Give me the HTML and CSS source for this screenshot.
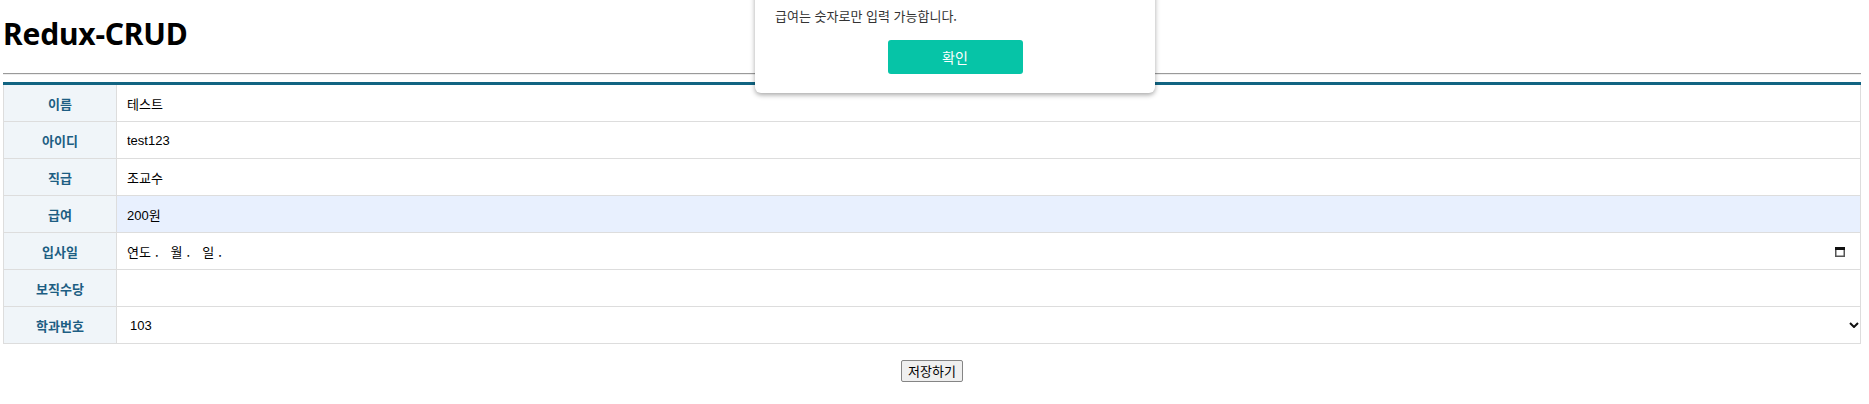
FILE: index.html
```html
<!DOCTYPE html>
<html lang="ko">
<head>
<meta charset="utf-8">
<title>Redux-CRUD</title>
<link rel="stylesheet" href="styles.css">
</head>
<body>
<div class="page">
  <h1 class="title">Redux-CRUD</h1>
  <div class="rule"></div>
  <table class="form-table">
    <tr>
      <th>이름</th>
      <td><input class="field" type="text" value="테스트"></td>
    </tr>
    <tr>
      <th>아이디</th>
      <td><input class="field" type="text" value="test123"></td>
    </tr>
    <tr>
      <th>직급</th>
      <td><input class="field" type="text" value="조교수"></td>
    </tr>
    <tr>
      <th>급여</th>
      <td class="autofill"><input class="field" type="text" value="200원"></td>
    </tr>
    <tr>
      <th>입사일</th>
      <td>
        <div class="date-field">
          <span class="date-text"><span>연도</span><span class="dot">.</span><span>월</span><span class="dot">.</span><span>일</span><span class="dot">.</span></span>
          <svg class="cal-icon" width="10" height="11" viewBox="0 0 10 11">
            <rect x="0.75" y="1.75" width="8.5" height="8.5" fill="none" stroke="#555" stroke-width="1.5"/>
            <rect x="0" y="1" width="10" height="3" fill="#111"/>
          </svg>
        </div>
      </td>
    </tr>
    <tr>
      <th>보직수당</th>
      <td><input class="field" type="text" value=""></td>
    </tr>
    <tr>
      <th>학과번호</th>
      <td>
        <div class="select-field">
          <span class="select-text">103</span>
          <svg class="chev" width="10" height="6" viewBox="0 0 10 6">
            <path d="M1 1 L5 5 L9 1" fill="none" stroke="#111" stroke-width="2"/>
          </svg>
        </div>
      </td>
    </tr>
  </table>
  <div class="actions">
    <button class="save-btn" type="button">저장하기</button>
  </div>
</div>

<div class="modal">
  <p class="modal-text">급여는 숫자로만 입력 가능합니다.</p>
  <div class="modal-actions">
    <button class="confirm-btn" type="button">확인</button>
  </div>
</div>
</body>
</html>
```

FILE: styles.css
```css
html, body {
  margin: 0;
  padding: 0;
  background: #fff;
}

body {
  font-family: "Liberation Sans", "Noto Sans CJK KR", sans-serif;
  font-size: 13px;
  color: #000;
}

.page {
  padding: 0 8px 0 3px;
}

.title {
  margin: 16px 0 0 0;
  font-family: "Noto Sans", "Noto Sans CJK KR", sans-serif;
  font-weight: 700;
  font-size: 30px;
  line-height: 36px;
  letter-spacing: -0.2px;
  color: #000;
}

.rule {
  margin-top: 21px;
  border-top: 1px solid #9a9a9a;
  border-bottom: 1px solid #eeeeee;
}

.form-table {
  margin-top: 7px;
  width: 100%;
  border-collapse: collapse;
  border-top: 3px solid #116482;
}

.form-table th,
.form-table td {
  border: 1px solid #dddddd;
  padding: 0;
  height: 36px;
}

.form-table tr:first-child th,
.form-table tr:first-child td {
  border-top: 3px solid #116482;
}

.form-table th {
  width: 112px;
  background: #f0f5f9;
  color: #1d5e83;
  font-family: "Noto Sans CJK KR", sans-serif;
  font-weight: 700;
  font-size: 13px;
  text-align: center;
}

.form-table td.autofill {
  background: #e8f0fe;
}

.field {
  display: block;
  box-sizing: border-box;
  width: 100%;
  height: 36px;
  border: 0;
  margin: 0;
  padding: 0 10px;
  background: transparent;
  font-family: "Liberation Sans", "Noto Sans CJK KR", sans-serif;
  font-size: 13px;
  color: #000;
  outline: none;
}

.date-field,
.select-field {
  display: flex;
  align-items: center;
  justify-content: space-between;
  height: 36px;
  box-sizing: border-box;
}

.date-field {
  padding: 0 15px 0 10px;
}

.date-text {
  display: flex;
  font-family: "Noto Sans CJK KR", sans-serif;
  font-size: 13px;
}

.date-text .dot {
  margin: 0 12px 0 4px;
}

.date-text .dot:last-child {
  margin-right: 0;
}

.cal-icon {
  display: block;
}

.select-field {
  padding: 0 0 0 13px;
}

.chev {
  display: block;
  margin-right: 1px;
}

.actions {
  display: flex;
  justify-content: center;
  margin-top: 16px;
}

.save-btn {
  font-family: "Noto Sans CJK KR", sans-serif;
  font-size: 13px;
  line-height: 18px;
  height: 22px;
  padding: 0 6px;
  background: #efefef;
  border: 1px solid #858585;
  border-radius: 2px;
  color: #000;
}

.modal {
  position: absolute;
  top: -30px;
  left: 755px;
  width: 400px;
  box-sizing: border-box;
  padding: 37px 20px 19px;
  background: #fff;
  border-radius: 6px;
  box-shadow: 0 2px 5px rgba(0, 0, 0, 0.35);
}

.modal-text {
  margin: 0;
  font-family: "Noto Sans CJK KR", sans-serif;
  font-size: 13px;
  line-height: 18px;
  color: #333;
}

.modal-actions {
  display: flex;
  justify-content: center;
  margin-top: 15px;
}

.confirm-btn {
  width: 135px;
  height: 34px;
  border: 0;
  border-radius: 3px;
  background: #06c4a7;
  color: #fff;
  font-family: "Noto Sans CJK KR", sans-serif;
  font-size: 14px;
}
```
